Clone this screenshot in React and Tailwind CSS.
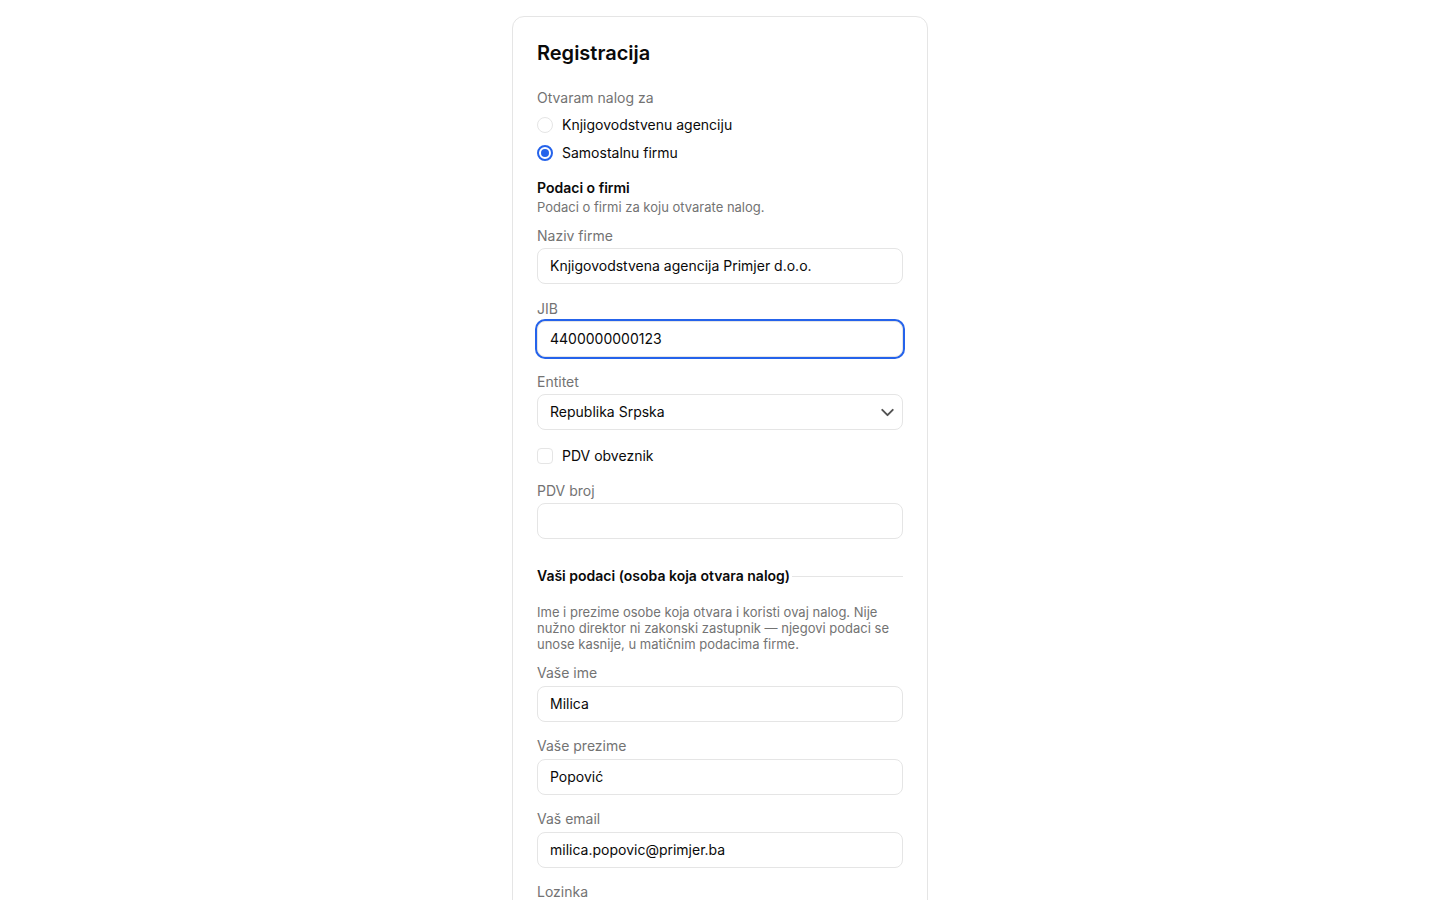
import React from 'react';
import { ChevronDown } from 'lucide-react';

const Field = ({ label, value, focused, gap = 'mb-0.5', className = '' }) => (
  <div className={className}>
    <div className={`text-sm leading-5 text-[#737373] ${gap}`}>{label}</div>
    <div
      className={`h-9 flex items-center px-3 rounded-lg border border-[#e5e5e5] bg-white text-sm text-[#0a0a0a] ${
        focused ? 'ring-2 ring-[#2563eb]' : ''
      }`}
    >
      {value}
    </div>
  </div>
);

const Radio = ({ label, checked }) => (
  <div className="flex items-center gap-[9px] h-5">
    {checked ? (
      <span className="w-4 h-4 rounded-full border-2 border-[#2563eb] flex items-center justify-center">
        <span className="w-2 h-2 rounded-full bg-[#2563eb]" />
      </span>
    ) : (
      <span className="w-4 h-4 rounded-full border border-[#e5e5e5] bg-white" />
    )}
    <span className="text-sm text-[#0a0a0a]">{label}</span>
  </div>
);

export default function App() {
  return (
    <div className="min-h-screen bg-white font-['Inter',sans-serif] pt-4 pb-10">
      <div className="mx-auto w-[416px] border border-[#e5e5e5] rounded-xl bg-white px-6 pt-[22px] pb-6 flex flex-col">
        <h1 className="text-xl leading-7 font-semibold text-[#0a0a0a]">Registracija</h1>

        <div className="mt-[21px] text-sm leading-5 text-[#737373]">Otvaram nalog za</div>
        <div className="mt-[7px] space-y-2">
          <Radio label="Knjigovodstvenu agenciju" />
          <Radio label="Samostalnu firmu" checked />
        </div>

        <div className="mt-[15px] text-sm leading-5 font-semibold text-[#0a0a0a]">Podaci o firmi</div>
        <div className="text-[13px] leading-[18px] text-[#737373]">Podaci o firmi za koju otvarate nalog.</div>

        <Field className="mt-[10px]" label="Naziv firme" value="Knjigovodstvena agencija Primjer d.o.o." />
        <Field className="mt-[15px]" label="JIB" value="4400000000123" focused />

        <div className="mt-[15px]">
          <div className="text-sm leading-5 text-[#737373] mb-0.5">Entitet</div>
          <div className="h-9 flex items-center justify-between pl-3 pr-1 rounded-lg border border-[#e5e5e5] text-sm text-[#0a0a0a]">
            <span>Republika Srpska</span>
            <ChevronDown size={21} strokeWidth={2.2} className="text-[#525252]" />
          </div>
        </div>

        <div className="mt-4 flex items-center gap-[9px] h-5">
          <span className="w-4 h-4 rounded border border-[#e5e5e5] bg-white" />
          <span className="text-sm text-[#0a0a0a]">PDV obveznik</span>
        </div>

        <Field className="mt-[15px]" label="PDV broj" value="" />

        <div className="mt-[27px] flex items-center gap-0.5">
          <span className="text-sm leading-5 font-semibold text-[#0a0a0a] whitespace-nowrap">
            Vaši podaci (osoba koja otvara nalog)
          </span>
          <span className="flex-1 h-px bg-[#e5e5e5]" />
        </div>

        <p className="mt-[18px] text-[13px] leading-4 text-[#737373]">
          Ime i prezime osobe koja otvara i koristi ovaj nalog. Nije nužno direktor ni zakonski zastupnik — njegovi
          podaci se unose kasnije, u matičnim podacima firme.
        </p>

        <Field className="mt-[11px]" gap="mb-[3px]" label="Vaše ime" value="Milica" />
        <Field className="mt-[14px]" gap="mb-[3px]" label="Vaše prezime" value="Popović" />
        <Field className="mt-[14px]" gap="mb-[3px]" label="Vaš email" value="milica.popovic@primjer.ba" />
        <Field className="mt-[14px]" gap="mb-[3px]" label="Lozinka" value="" />
        <Field className="mt-[14px]" gap="mb-[3px]" label="Ponovite lozinku" value="" />

        <button className="mt-6 h-9 rounded-lg bg-[#171717] text-white text-sm font-medium">Registruj se</button>
      </div>
    </div>
  );
}
